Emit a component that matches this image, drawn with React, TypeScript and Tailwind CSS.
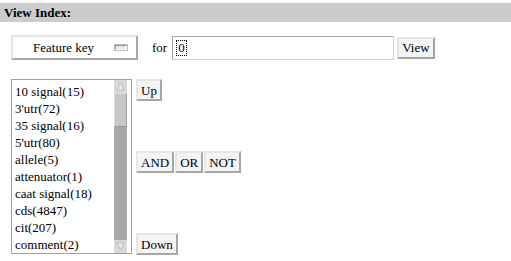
import React from "react";

const items = [
  "10 signal(15)",
  "3'utr(72)",
  "35 signal(16)",
  "5'utr(80)",
  "allele(5)",
  "attenuator(1)",
  "caat signal(18)",
  "cds(4847)",
  "cit(207)",
  "comment(2)",
];

function Btn({ children, className = "" }: { children: React.ReactNode; className?: string }) {
  return (
    <div
      className={
        "flex items-center justify-center h-[22px] px-[3px] bg-[#f4f4f4] border-2 border-t-[#e6e6e6] border-l-[#e6e6e6] border-b-[#a6a6a6] border-r-[#a6a6a6] text-[13px] leading-none text-black font-['Liberation_Serif'] " +
        className
      }
    >
      {children}
    </div>
  );
}

export default function App() {
  return (
    <div className="w-[511px] h-[261px] bg-white text-black overflow-hidden font-['Liberation_Serif']">
      <div className="mt-[3px] h-[19px] bg-[#cccccc] flex items-center pl-[4px] text-[13px] font-bold font-['Liberation_Serif']">
        View Index:
      </div>
      <div className="flex items-center mt-[13px] pl-[11px] h-[25px]">
        <div className="w-[127px] h-[25px] bg-white border-2 border-t-[#e4e4e4] border-l-[#e4e4e4] border-b-[#a8a8a8] border-r-[#a8a8a8] flex items-center">
          <span className="ml-[20px] text-[13px] font-['Liberation_Serif']">Feature key</span>
          <span className="ml-[21px] w-[12px] h-[5px] bg-[#e8e8e8] border border-t-[#999] border-l-[#999] border-b-[#fff] border-r-[#fff] outline outline-1 outline-[#bbb]"></span>
        </div>
        <span className="ml-[14px] text-[13px] font-['Liberation_Serif']">for</span>
        <div className="ml-[5px] w-[222px] h-[24px] border border-[#a6a6a6] border-b-[#d0d0d0] border-r-[#d0d0d0] flex items-center pl-[3px] text-[13px] font-['Liberation_Serif']">
          <span className="border border-dotted border-black px-[1px] leading-[14px]">0</span>
        </div>
        <Btn className="ml-[3px]">View</Btn>
      </div>
      <div className="flex mt-[19px] pl-[11px]">
        <div className="w-[121px] h-[175px] border border-[#a0a0a0] flex">
          <div className="flex-1 pt-[3px] pl-[3px] text-[13px] font-['Liberation_Serif']">
            {items.map((it) => (
              <div key={it} className="h-[17px] leading-[17px] whitespace-nowrap">
                {it}
              </div>
            ))}
          </div>
          <div className="w-[13px] mr-[4px] bg-[#a8a8a8] flex flex-col">
            <div className="h-[13px] bg-[#d8d8d8] flex items-center justify-center">
              <svg width="9" height="9" viewBox="0 0 9 9">
                <path d="M4.5 1 L8 8 L1 8 Z" fill="#ebebeb" stroke="#bdbdbd" />
              </svg>
            </div>
            <div className="h-[34px] bg-[#c8c8c8] border border-t-[#dadada] border-l-[#dadada] border-b-[#9a9a9a] border-r-[#9a9a9a]"></div>
            <div className="flex-1"></div>
            <div className="h-[13px] bg-[#d8d8d8] flex items-center justify-center">
              <svg width="9" height="9" viewBox="0 0 9 9">
                <path d="M1 1 L8 1 L4.5 8 Z" fill="#ebebeb" stroke="#bdbdbd" />
              </svg>
            </div>
          </div>
        </div>
        <div className="ml-[4px] flex flex-col h-[175px]">
          <div className="flex">
            <Btn>Up</Btn>
          </div>
          <div className="flex mt-[50px]">
            <Btn>AND</Btn>
            <Btn className="ml-px">OR</Btn>
            <Btn className="ml-px">NOT</Btn>
          </div>
          <div className="flex mt-auto mb-[-1px]">
            <Btn>Down</Btn>
          </div>
        </div>
      </div>
    </div>
  );
}
